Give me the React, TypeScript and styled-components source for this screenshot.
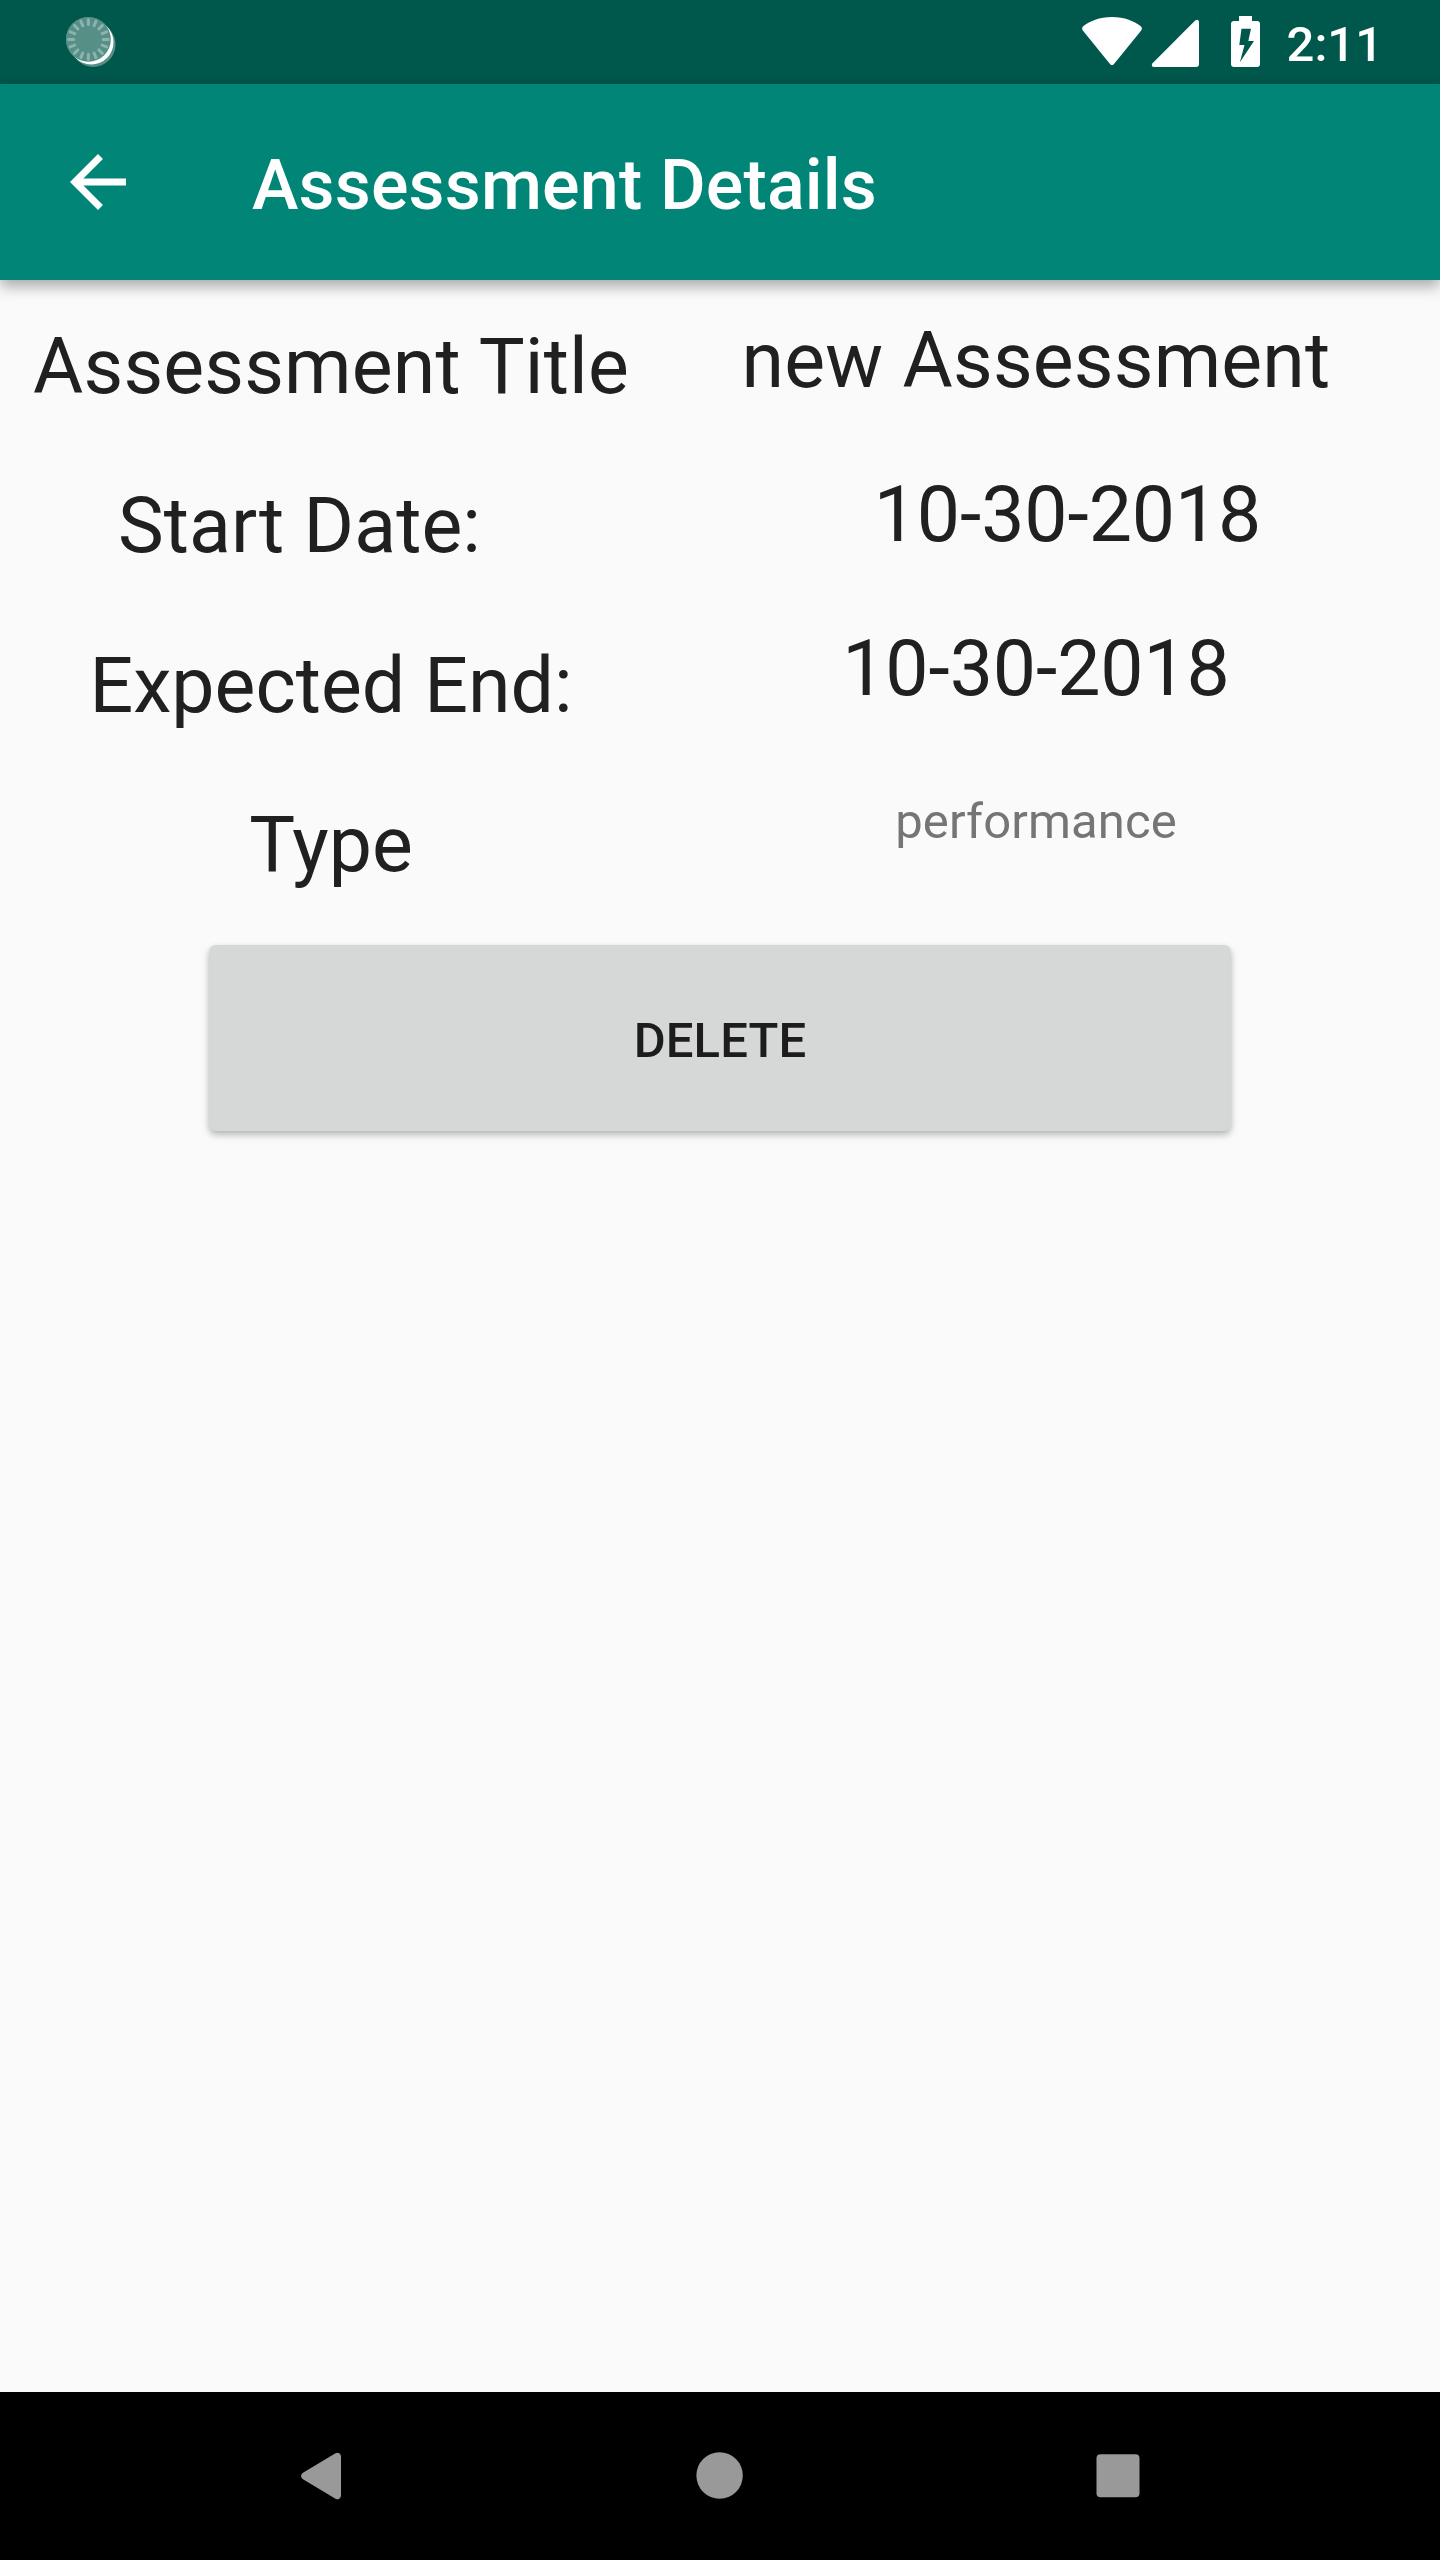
import React from "react";
import styled, { createGlobalStyle } from "styled-components";

const GlobalStyle = createGlobalStyle`
  body {
    margin: 0;
    background: #fafafa;
  }
`;

const Screen = styled.div`
  display: flex;
  flex-direction: column;
  width: 1440px;
  height: 2560px;
  overflow: hidden;
  background: #fafafa;
  font-family: Roboto, "Noto Sans", sans-serif;
  color: #202020;
`;

const StatusBar = styled.div`
  display: flex;
  flex: none;
  justify-content: space-between;
  height: 84px;
  background: #00574b;
  color: #fff;
`;

const StatusGroup = styled.div`
  display: flex;
  align-items: flex-start;
`;

const Icon = styled.svg`
  display: block;
  flex: none;
`;

const Clock = styled.time`
  margin-left: 25px;
  padding: 16px 57px 0 0;
  font-size: 49px;
  line-height: 57px;
  font-weight: 500;
`;

const AppBar = styled.header`
  display: flex;
  flex: none;
  align-items: center;
  height: 196px;
  padding-left: 56px;
  box-sizing: border-box;
  background: #008577;
  color: #fff;
  box-shadow: 0 6px 14px rgba(0, 0, 0, 0.34);
`;

const BackButton = styled.button`
  padding: 0;
  border: 0;
  background: none;
  color: inherit;
`;

const Title = styled.h1`
  margin: 6px 0 0 112px;
  font-size: 70px;
  line-height: 82px;
  font-weight: 500;
  letter-spacing: 0.16px;
`;

const Content = styled.main`
  display: flex;
  flex: 1;
  flex-direction: column;
  align-items: center;
`;

const Fields = styled.div`
  display: grid;
  grid-template-columns: 662px 748px;
  align-self: flex-start;
  height: 665px;
`;

const Column = styled.div<{ $top: number; $gap: number }>`
  display: flex;
  flex-direction: column;
  align-items: center;
  gap: ${(p) => p.$gap}px;
  padding-top: ${(p) => p.$top}px;
`;

const Text = styled.span<{ $before?: number; $after?: number; $tracking?: number }>`
  padding-left: ${(p) => p.$before ?? 0}px;
  padding-right: ${(p) => p.$after ?? 0}px;
  font-size: 77px;
  line-height: 90px;
  letter-spacing: ${(p) => p.$tracking ?? 0}px;
  white-space: nowrap;
`;

const SmallText = styled.span`
  margin-top: 15px;
  font-size: 49px;
  line-height: 57px;
  letter-spacing: 0.12px;
  color: #757575;
`;

const DeleteButton = styled.button`
  width: 1022px;
  height: 186px;
  padding: 5px 0 0;
  border: 0;
  border-radius: 7px;
  background: #d6d7d7;
  color: #1c1c1c;
  font-family: inherit;
  font-size: 49px;
  line-height: 57px;
  font-weight: 500;
  letter-spacing: 0.15px;
  text-transform: uppercase;
  box-shadow: 0 4px 7px rgba(0, 0, 0, 0.26), 0 0 4px rgba(0, 0, 0, 0.05);
`;

const NavBar = styled.nav`
  display: flex;
  flex: none;
  justify-content: center;
  height: 168px;
  padding-right: 1px;
  background: #000;
`;

const NavButton = styled.button`
  display: flex;
  justify-content: center;
  width: 398.5px;
  padding: 0;
  border: 0;
  background: none;
  color: #999;
`;

const ticks = Array.from({ length: 16 }, (_, i) => i * 22.5);

const SyncIcon = () => (
  <Icon width="140" height="84" viewBox="0 0 140 84">
    <g fill="#568f86">
      <circle cx="88.4" cy="39.4" r="22.4" />
      <circle cx="93.2" cy="44.5" r="22.4" />
    </g>
    <circle cx="91.3" cy="42.3" r="22.2" fill="#fff" />
    <circle cx="88.4" cy="39.4" r="22.4" fill="#568f86" />
    <g stroke="#8cb3ad" strokeWidth="3" strokeLinecap="round">
      {ticks.map((a) => (
        <line key={a} x1="88.4" y1="19.6" x2="88.4" y2="24.6" transform={`rotate(${a} 88.4 39.4)`} />
      ))}
    </g>
  </Icon>
);

const SignalIcons = () => (
  <Icon width="182" height="84" viewBox="1080 0 182 84" fill="#fff">
    <path d="M1083.2 26.2C1089 21.3 1100 17 1112 17s23 4.300 28.800 9.200q2 1.800.400 4.200L1113.800 64.200q-1.800 1.800-3.600 0L1082.800 30.400q-1.600-2.400.400-4.200z" />
    <path d="M1195.200 20.600q3.800-2.200 3.800 2V64q0 3-3 3h-41.700q-3.800-.400-1.800-3.800z" />
    <path
      fillRule="evenodd"
      d="M1239 16h13v5h5q3 0 3 3v40q0 3-3 3h-23q-3 0-3-3V24q0-3 3-3h5zM1241.500 28.700l-2.200 16.300h5.200l-4.600 17.300 14.100-21.300h-5.700l2.700-12.300z"
    />
  </Icon>
);

const ArrowIcon = () => (
  <Icon width="84" height="84" viewBox="0 0 24 24" fill="#fff">
    <path d="M20 11H7.830l5.590-5.590L12 4l-8 8 8 8 1.410-1.410L7.830 13H20v-2z" />
  </Icon>
);

const labels = [
  { text: "Assessment Title", tracking: 0.17 },
  { text: "Start Date:", after: 63, tracking: 0.1 },
  { text: "Expected End:" },
  { text: "Type" },
];

const values = [
  { text: "new Assessment", tracking: 0.17 },
  { text: "10-30-2018", before: 63, tracking: -0.12 },
  { text: "10-30-2018", tracking: -0.12 },
];

export default function App() {
  return (
    <Screen>
      <GlobalStyle />
      <StatusBar>
        <SyncIcon />
        <StatusGroup>
          <SignalIcons />
          <Clock>2:11</Clock>
        </StatusGroup>
      </StatusBar>
      <AppBar>
        <BackButton aria-label="Back">
          <ArrowIcon />
        </BackButton>
        <Title>Assessment Details</Title>
      </AppBar>
      <Content>
        <Fields>
          <Column $top={42} $gap={69.3}>
            {labels.map((l) => (
              <Text key={l.text} $after={l.after} $tracking={l.tracking}>
                {l.text}
              </Text>
            ))}
          </Column>
          <Column $top={36} $gap={64}>
            {values.map((v, i) => (
              <Text key={i} $before={v.before} $tracking={v.tracking}>
                {v.text}
              </Text>
            ))}
            <SmallText>performance</SmallText>
          </Column>
        </Fields>
        <DeleteButton>Delete</DeleteButton>
      </Content>
      <NavBar>
        <NavButton aria-label="Back">
          <Icon width="98" height="168" viewBox="272 2392 98 168" fill="currentColor">
            <path d="M302.600 2473L335.500 2453.300Q337.500 2452.300 339.300 2453.300Q341 2454.500 341 2456.500V2495.500Q341 2497.500 339.300 2498.700Q337.500 2499.700 335.500 2498.700L302.600 2479Q299.400 2476 302.600 2473z" />
          </Icon>
        </NavButton>
        <NavButton aria-label="Home">
          <Icon width="98" height="168" viewBox="0 0 98 168" fill="currentColor">
            <circle cx="48.600" cy="83.500" r="23.200" />
          </Icon>
        </NavButton>
        <NavButton aria-label="Recent apps">
          <Icon width="98" height="168" viewBox="0 0 98 168" fill="currentColor">
            <rect x="27.500" y="62.300" width="43" height="43" rx="4" />
          </Icon>
        </NavButton>
      </NavBar>
    </Screen>
  );
}
